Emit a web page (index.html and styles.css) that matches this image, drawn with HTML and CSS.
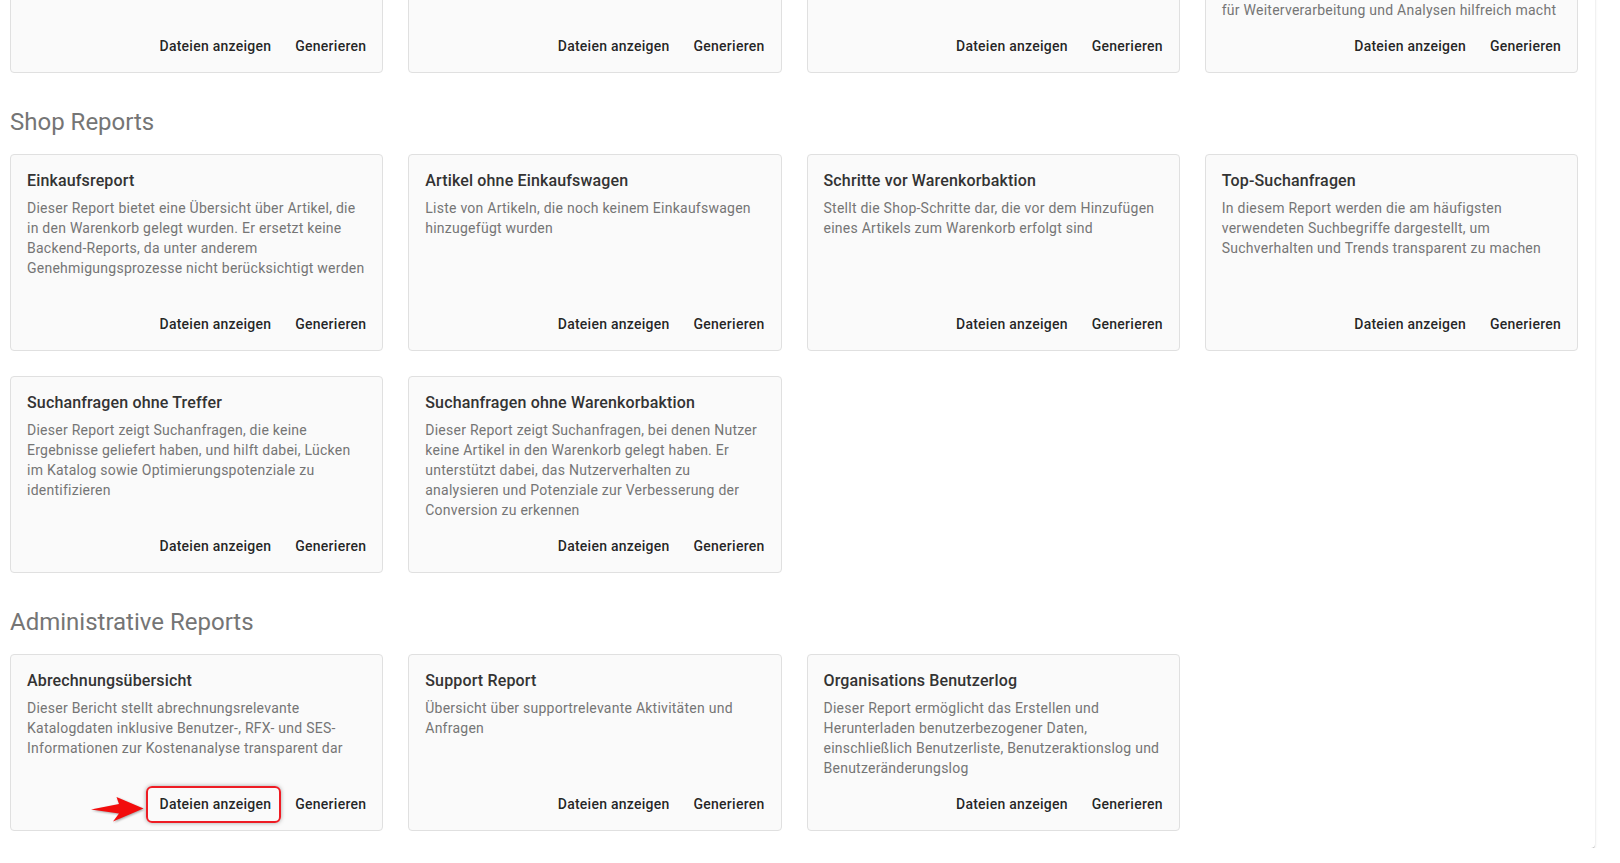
FILE: index.html
```html
<!DOCTYPE html>
<html lang="de">
<head>
    <meta charset="UTF-8">
    <title>Reports</title>
    <link rel="stylesheet" href="styles.css">
</head>
<body>
    <div class="panel">
        <div class="report-grid">
            <div class="card">
                <p class="card-text"></p>
                <div class="card-actions">
                    <button class="btn">Dateien anzeigen</button>
                    <button class="btn">Generieren</button>
                </div>
            </div>
            <div class="card">
                <p class="card-text"></p>
                <div class="card-actions">
                    <button class="btn">Dateien anzeigen</button>
                    <button class="btn">Generieren</button>
                </div>
            </div>
            <div class="card">
                <p class="card-text"></p>
                <div class="card-actions">
                    <button class="btn">Dateien anzeigen</button>
                    <button class="btn">Generieren</button>
                </div>
            </div>
            <div class="card">
                <p class="card-text">für Weiterverarbeitung und Analysen hilfreich macht</p>
                <div class="card-actions">
                    <button class="btn">Dateien anzeigen</button>
                    <button class="btn">Generieren</button>
                </div>
            </div>
        </div>

        <h2 class="section-title">Shop Reports</h2>
        <div class="report-grid">
            <div class="card">
                <h3 class="card-title">Einkaufsreport</h3>
                <p class="card-text">Dieser Report bietet eine Übersicht über Artikel, die in den Warenkorb gelegt wurden. Er ersetzt keine Backend-Reports, da unter anderem Genehmigungsprozesse nicht berücksichtigt werden</p>
                <div class="card-actions">
                    <button class="btn">Dateien anzeigen</button>
                    <button class="btn">Generieren</button>
                </div>
            </div>
            <div class="card">
                <h3 class="card-title">Artikel ohne Einkaufswagen</h3>
                <p class="card-text">Liste von Artikeln, die noch keinem Einkaufswagen hinzugefügt wurden</p>
                <div class="card-actions">
                    <button class="btn">Dateien anzeigen</button>
                    <button class="btn">Generieren</button>
                </div>
            </div>
            <div class="card">
                <h3 class="card-title">Schritte vor Warenkorbaktion</h3>
                <p class="card-text">Stellt die Shop-Schritte dar, die vor dem Hinzufügen eines Artikels zum Warenkorb erfolgt sind</p>
                <div class="card-actions">
                    <button class="btn">Dateien anzeigen</button>
                    <button class="btn">Generieren</button>
                </div>
            </div>
            <div class="card">
                <h3 class="card-title">Top-Suchanfragen</h3>
                <p class="card-text">In diesem Report werden die am häufigsten verwendeten Suchbegriffe dargestellt, um Suchverhalten und Trends transparent zu machen</p>
                <div class="card-actions">
                    <button class="btn">Dateien anzeigen</button>
                    <button class="btn">Generieren</button>
                </div>
            </div>
            <div class="card">
                <h3 class="card-title">Suchanfragen ohne Treffer</h3>
                <p class="card-text">Dieser Report zeigt Suchanfragen, die keine Ergebnisse geliefert haben, und hilft dabei, Lücken im Katalog sowie Optimierungspotenziale zu identifizieren</p>
                <div class="card-actions">
                    <button class="btn">Dateien anzeigen</button>
                    <button class="btn">Generieren</button>
                </div>
            </div>
            <div class="card">
                <h3 class="card-title">Suchanfragen ohne Warenkorbaktion</h3>
                <p class="card-text">Dieser Report zeigt Suchanfragen, bei denen Nutzer keine Artikel in den Warenkorb gelegt haben. Er unterstützt dabei, das Nutzerverhalten zu analysieren und Potenziale zur Verbesserung der Conversion zu erkennen</p>
                <div class="card-actions">
                    <button class="btn">Dateien anzeigen</button>
                    <button class="btn">Generieren</button>
                </div>
            </div>
        </div>

        <h2 class="section-title">Administrative Reports</h2>
        <div class="report-grid">
            <div class="card">
                <h3 class="card-title">Abrechnungsübersicht</h3>
                <p class="card-text">Dieser Bericht stellt abrechnungsrelevante Katalogdaten inklusive Benutzer-, RFX- und SES-Informationen zur Kostenanalyse transparent dar</p>
                <div class="card-actions">
                    <button class="btn btn-marked">
                        <svg class="marker-arrow" width="53" height="25" viewBox="0 0 53 25">
                            <polygon points="0,12.5 28,7 25.5,0 52.5,11.5 22,24.5 28,16.5" fill="#f20d0d"/>
                        </svg>
                        <span class="marker-box"></span>
                        Dateien anzeigen
                    </button>
                    <button class="btn">Generieren</button>
                </div>
            </div>
            <div class="card">
                <h3 class="card-title">Support Report</h3>
                <p class="card-text">Übersicht über supportrelevante Aktivitäten und Anfragen</p>
                <div class="card-actions">
                    <button class="btn">Dateien anzeigen</button>
                    <button class="btn">Generieren</button>
                </div>
            </div>
            <div class="card">
                <h3 class="card-title">Organisations Benutzerlog</h3>
                <p class="card-text">Dieser Report ermöglicht das Erstellen und Herunterladen benutzerbezogener Daten, einschließlich Benutzerliste, Benutzeraktionslog und Benutzeränderungslog</p>
                <div class="card-actions">
                    <button class="btn">Dateien anzeigen</button>
                    <button class="btn">Generieren</button>
                </div>
            </div>
        </div>
    </div>
</body>
</html>
```

FILE: styles.css
```css
* {
    box-sizing: border-box;
}

body {
    margin: 0;
    background: #fff;
    font-family: Roboto, "Noto Sans", sans-serif;
    overflow: hidden;
}

.panel {
    width: 1595px;
    margin-top: -40px;
    padding: 23px 17px 17px 10px;
    background: #fff;
    border-radius: 0 0 4px 0;
    box-shadow: 0 2px 1px -1px rgba(0,0,0,0.2), 0 1px 1px 0 rgba(0,0,0,0.14), 0 1px 3px 0 rgba(0,0,0,0.12);
}

.section-title {
    margin: 33px 0 16px;
    font-size: 24px;
    line-height: 32px;
    font-weight: 400;
    color: #757575;
}

.report-grid {
    display: grid;
    grid-template-columns: repeat(4, 1fr);
    grid-auto-rows: 1fr;
    gap: 25px;
}

.card {
    display: flex;
    flex-direction: column;
    background: #fafafa;
    border: 1px solid #e0e0e0;
    border-radius: 4px;
    padding: 16px 16px 8px;
}

.card-title {
    margin: 0 0 7px;
    font-size: 16px;
    line-height: 20px;
    font-weight: 500;
    letter-spacing: 0.15px;
    color: #333;
}

.card-text {
    flex: 1;
    margin: 0;
    font-size: 14px;
    line-height: 20px;
    letter-spacing: 0.25px;
    color: #757575;
}

.card-actions {
    display: flex;
    justify-content: flex-end;
    gap: 8px;
    margin: 8px -8px 0;
}

.btn {
    position: relative;
    height: 36px;
    padding: 0 8px;
    border: none;
    border-radius: 4px;
    background: transparent;
    color: rgba(0,0,0,0.87);
    font-family: Roboto, "Noto Sans", sans-serif;
    font-size: 14px;
    font-weight: 500;
    line-height: 36px;
    letter-spacing: 0.25px;
    cursor: pointer;
}

.marker-box {
    position: absolute;
    top: 0;
    right: -2px;
    bottom: -1px;
    left: -6px;
    border: 2px solid #ee1c24;
    border-radius: 6px;
    box-shadow: 0 0 4px rgba(0,0,0,0.35);
}

.marker-arrow {
    position: absolute;
    top: 11px;
    left: -61px;
    filter: drop-shadow(1px 1px 1px rgba(0,0,0,0.35));
}
```
